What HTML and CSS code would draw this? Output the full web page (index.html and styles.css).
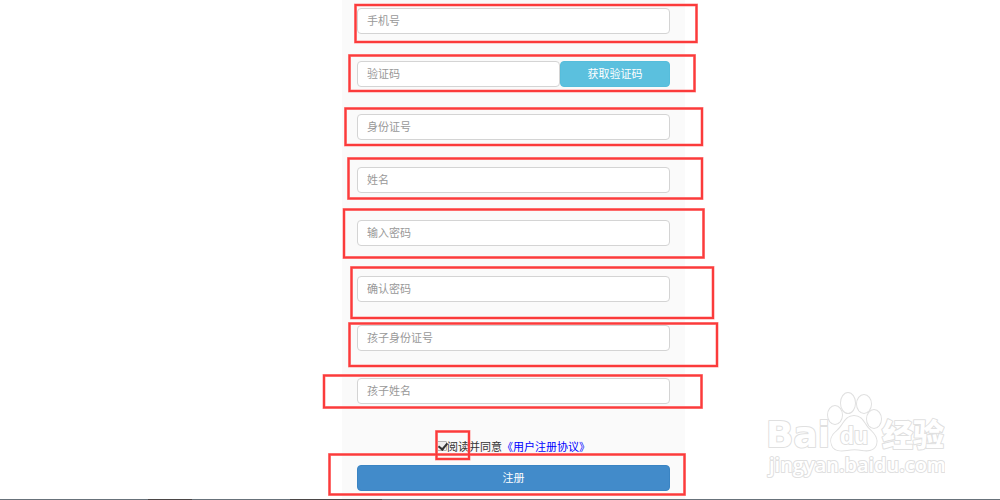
FILE: index.html
```html
<!DOCTYPE html>
<html lang="zh-CN">
<head>
<meta charset="utf-8">
<title>用户注册</title>
<link rel="stylesheet" href="styles.css">
</head>
<body>
<main class="page">
  <form class="panel">
    <input class="field" type="tel" placeholder="手机号" aria-label="手机号">
    <div class="code-row">
      <input class="field" type="text" placeholder="验证码" aria-label="验证码">
      <button class="btn btn-info" type="button">获取验证码</button>
    </div>
    <input class="field" type="text" placeholder="身份证号" aria-label="身份证号">
    <input class="field" type="text" placeholder="姓名" aria-label="姓名">
    <input class="field field-password" type="password" placeholder="输入密码" aria-label="输入密码">
    <input class="field field-confirm" type="password" placeholder="确认密码" aria-label="确认密码">
    <input class="field" type="text" placeholder="孩子身份证号" aria-label="孩子身份证号">
    <input class="field" type="text" placeholder="孩子姓名" aria-label="孩子姓名">
    <div class="agree">
      <input class="check" type="checkbox" id="agree" checked>
      <label for="agree">阅读并同意</label>
      <a class="terms" href="#">《用户注册协议》</a>
    </div>
    <button class="btn btn-primary" type="submit">注册</button>
    <svg class="marks" viewBox="320 0 400 500" aria-hidden="true">
      <defs>
        <g id="boxes">
          <rect x="355.5" y="5" width="341" height="37"/>
          <rect x="349.5" y="55.5" width="345" height="35.5"/>
          <rect x="345.5" y="108.5" width="356.5" height="36.5"/>
          <rect x="348.5" y="158.5" width="353.5" height="40"/>
          <rect x="344" y="209.5" width="359.5" height="48"/>
          <rect x="351.5" y="267.5" width="361.5" height="50.5"/>
          <rect x="349.5" y="323.5" width="367.5" height="42.5"/>
          <rect x="324" y="375.5" width="377.5" height="32"/>
          <rect x="436.5" y="431.5" width="32.5" height="27.5"/>
          <rect x="329.5" y="454.5" width="355" height="40"/>
        </g>
      </defs>
      <use href="#boxes" class="mark-halo"/>
      <use href="#boxes" class="mark-line"/>
    </svg>
  </form>
</main>
<footer class="strip"></footer>
<svg class="watermark" viewBox="0 0 190 95" role="img" aria-label="Baidu 经验">
  <g class="wm-shape">
    <text class="wm-latin" x="11" y="59">Bai</text>
    <ellipse cx="80" cy="27" rx="7" ry="9"/>
    <ellipse cx="93" cy="15" rx="7" ry="10"/>
    <ellipse cx="109" cy="16" rx="7" ry="9"/>
    <ellipse cx="119" cy="31" rx="7" ry="9"/>
    <path d="M99 28C90 28 89 37 82 43C76 48 75 52 77 57C79 63 86 63 92 62C97 61 102 61 107 62C113 63 119 62 121 57C123 51 120 47 115 42C109 37 108 28 99 28Z"/>
    <text class="wm-du" x="85" y="56">du</text>
    <text class="wm-cjk" x="127" y="58">经验</text>
    <text class="wm-url" x="14" y="84">jingyan.baidu.com</text>
  </g>
</svg>
</body>
</html>
```
FILE: styles.css
```css
* { box-sizing: border-box; }
body {
  margin: 0;
  min-height: 100vh;
  display: flex;
  flex-direction: column;
  overflow-x: hidden;
  background: #fff;
  color: #333;
  font: 11px/16px "Noto Sans CJK SC", sans-serif;
}
.page {
  flex: 1;
  display: flex;
  justify-content: center;
  padding-left: 27px;
}
.panel {
  position: relative;
  width: 100%;
  max-width: 343px;
  padding: 8px 15px;
  background: #fafafa;
  display: flex;
  flex-direction: column;
}
.field {
  width: 100%;
  height: 26px;
  margin: 0 0 27px;
  padding: 0 9px 2px;
  border: 1px solid #d4d4d4;
  border-radius: 4px;
  background: #fff;
  color: #555;
  font: inherit;
}
.field::placeholder { color: #999; opacity: 1; }
.field-password { margin-bottom: 30px; }
.field-confirm { margin-bottom: 23px; }
.code-row { display: flex; }
.code-row .field { flex: 1; min-width: 0; }
.btn {
  height: 26px;
  padding: 0 0 2px;
  border: 1px solid;
  border-radius: 4px;
  color: #fff;
  font: inherit;
}
.btn-info {
  width: 110px;
  background: #5bc0de;
  border-color: #56bddb;
}
.btn-primary {
  background: #428bca;
  border-color: #3a84c3;
}
.agree {
  display: flex;
  align-items: center;
  justify-content: center;
  margin: 7px 0 11px;
  color: #333;
}
.check {
  appearance: none;
  position: relative;
  width: 10px;
  height: 10px;
  margin: 0;
  border: 1px solid #b4b4b4;
  border-radius: 1px;
  background: #eee;
}
.check:checked::after {
  content: "";
  position: absolute;
  left: 2px;
  top: -1px;
  width: 4px;
  height: 7px;
  border: solid #333;
  border-width: 0 2px 2px 0;
  transform: rotate(40deg);
}
.terms { color: #00f; text-decoration: none; }
.marks {
  position: absolute;
  left: -22px;
  top: 0;
  width: 400px;
  height: 500px;
  fill: none;
  pointer-events: none;
}
.mark-halo { stroke: #ff9c9c; stroke-width: 3; }
.mark-line { stroke: #fb3b3b; stroke-width: 2; }
.strip {
  height: 1px;
  background: linear-gradient(to right, #68727a 148px, #4a4646 148px 192px, #68727a 192px 290px, #4a4646 290px 382px, #68727a 382px);
}
.watermark {
  position: absolute;
  right: 55px;
  bottom: 17px;
  width: 190px;
  height: 95px;
}
.wm-shape {
  fill: #fff;
  stroke: #e0e0e0;
  stroke-width: 2px;
  stroke-linejoin: round;
  paint-order: stroke;
}
.wm-latin { font: bold 36px "DejaVu Sans", sans-serif; }
.wm-du { font: bold 23px "Liberation Sans", sans-serif; }
.wm-cjk { font: 900 31px "Noto Sans CJK SC", sans-serif; }
.wm-url { font: 600 20px "Open Sans", sans-serif; }
```
